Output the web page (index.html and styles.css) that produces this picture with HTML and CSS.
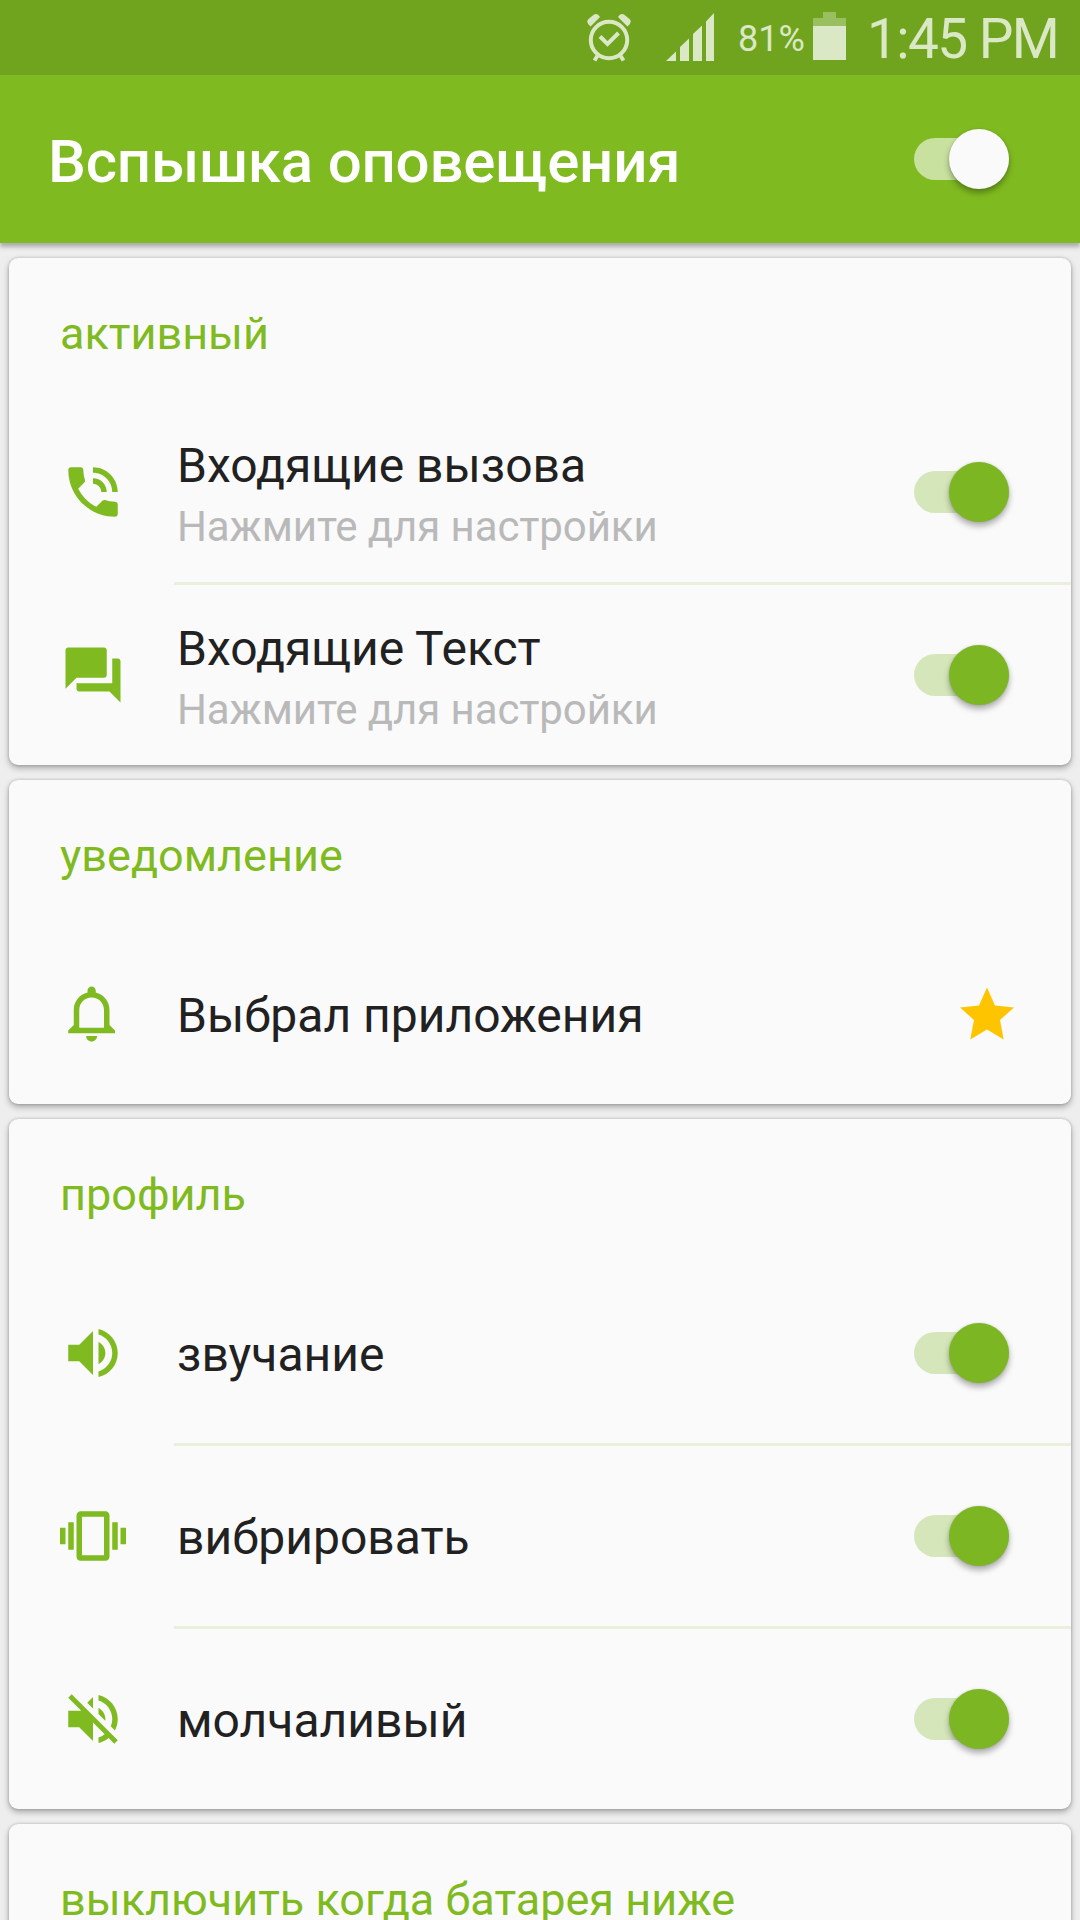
FILE: index.html
```html
<!DOCTYPE html>
<html lang="ru">
<head>
<meta charset="utf-8">
<title>Вспышка оповещения</title>
<meta name="viewport" content="width=device-width,initial-scale=1">
<link rel="stylesheet" href="styles.css">
</head>
<body>
<div class="status-bar">
  <svg class="alarm" width="46" height="50" viewBox="0 0 46 50">
    <g fill="none" stroke="currentColor">
      <circle cx="23" cy="27" r="18.2" stroke-width="4"/>
      <path d="M14 23.500l7.500 7.500L32.500 20" stroke-width="4"/>
      <path d="M12 42l-3.500 5.500M34 42l3.500 5.500" stroke-width="4"/>
    </g>
    <path fill="currentColor" d="M4.500 13.500Q-.8 9 2.500 6L8 1.500Q11.500-.5 14 4zM41.500 13.500Q46.800 9 43.500 6L38 1.500Q34.500-.5 32 4z"/>
  </svg>
  <svg class="signal" width="48" height="48" viewBox="0 0 48 48">
    <path fill="currentColor" d="M0 48L10 38.500V48zM14 34l9-8.500V48h-9zM27 21l9-8.500V48h-9zM40 8.500L48 0V48h-8z"/>
  </svg>
  <span class="percent">81%</span>
  <svg class="battery" width="33" height="48" viewBox="0 0 33 48">
    <path fill="currentColor" opacity=".4" d="M0 6h10V0h13v6h10v8H0z"/>
    <path fill="currentColor" d="M0 14h33v34H0z"/>
  </svg>
  <span class="clock">1:45 PM</span>
</div>

<header class="app-bar">
  <h1>Вспышка оповещения</h1>
  <div class="switch light"><span class="thumb"></span></div>
</header>

<main class="cards">
  <section class="card">
    <h2>активный</h2>
    <div class="row">
      <svg class="icon" viewBox="0 0 24 24"><path d="M20 15.500c-1.250 0-2.450-.2-3.570-.57-.35-.11-.74-.03-1.020.24l-2.200 2.200c-2.830-1.440-5.150-3.750-6.590-6.590l2.200-2.210c.28-.26.36-.65.25-1C8.700 6.450 8.500 5.250 8.500 4c0-.55-.45-1-1-1H4c-.55 0-1 .45-1 1 0 9.390 7.610 17 17 17 .55 0 1-.45 1-1v-3.500c0-.55-.45-1-1-1zM19 12h2c0-4.970-4.030-9-9-9v2c3.870 0 7 3.130 7 7zm-4 0h2c0-2.760-2.240-5-5-5v2c1.660 0 3 1.340 3 3z"/></svg>
      <div class="text two-line">
        <div class="label">Входящие вызова</div>
        <div class="hint">Нажмите для настройки</div>
      </div>
      <div class="switch"><span class="thumb"></span></div>
    </div>
    <div class="divider"></div>
    <div class="row">
      <svg class="icon" viewBox="0 0 24 24"><path d="M21 6h-2v9H6v2c0 .55.45 1 1 1h11l4 4V7c0-.55-.45-1-1-1zm-4 6V3c0-.55-.45-1-1-1H3c-.55 0-1 .45-1 1v14l4-4h10c.55 0 1-.45 1-1z"/></svg>
      <div class="text two-line">
        <div class="label">Входящие Текст</div>
        <div class="hint">Нажмите для настройки</div>
      </div>
      <div class="switch"><span class="thumb"></span></div>
    </div>
  </section>

  <section class="card">
    <h2>уведомление</h2>
    <div class="row">
      <svg class="icon" viewBox="0 0 24 24"><path d="M11.500 22c1.100 0 2-.9 2-2h-4c0 1.100.9 2 2 2zm6.500-6v-5.500c0-3.070-2.130-5.640-5-6.320V3.500c0-.83-.67-1.500-1.500-1.500S10 2.670 10 3.500v.68c-2.870.68-5 3.250-5 6.320V16l-2 2v1h17v-1l-2-2zm-2 1H7v-6.500C7 8.010 9.010 6 11.500 6S16 8.010 16 10.500V17z"/></svg>
      <div class="text"><div class="label">Выбрал приложения</div></div>
      <svg class="star" viewBox="0 0 54 54"><path d="M27 .5L35 18.500 54 20.500 40 33 43.700 52.500 27 42.500 10.300 52.500 14 33 0 20.500 19 18.500z"/></svg>
    </div>
  </section>

  <section class="card">
    <h2>профиль</h2>
    <div class="row">
      <svg class="icon" viewBox="0 0 24 24"><path d="M3 9v6h4l5 5V4L7 9H3zm13.500 3c0-1.770-1.020-3.290-2.500-4.030v8.050c1.480-.73 2.500-2.250 2.500-4.020zM14 3.230v2.060c2.890.86 5 3.540 5 6.710s-2.110 5.850-5 6.710v2.060c4.010-.91 7-4.490 7-8.770s-2.990-7.860-7-8.770z"/></svg>
      <div class="text"><div class="label">звучание</div></div>
      <div class="switch"><span class="thumb"></span></div>
    </div>
    <div class="divider"></div>
    <div class="row">
      <svg class="icon" viewBox="0 0 24 24"><path d="M0 15h2V9H0v6zm3 2h2V7H3v10zm19-8v6h2V9h-2zm-3 8h2V7h-2v10zM16.500 3h-9C6.670 3 6 3.670 6 4.500v15c0 .83.67 1.500 1.500 1.500h9c.83 0 1.500-.67 1.500-1.500v-15c0-.83-.67-1.500-1.500-1.500zM16 19H8V5h8v14z"/></svg>
      <div class="text"><div class="label">вибрировать</div></div>
      <div class="switch"><span class="thumb"></span></div>
    </div>
    <div class="divider"></div>
    <div class="row">
      <svg class="icon" viewBox="0 0 24 24"><path d="M16.500 12c0-1.770-1.020-3.290-2.500-4.030v2.210l2.450 2.450c.03-.2.05-.41.05-.63zm2.500 0c0 .94-.2 1.820-.54 2.640l1.510 1.510C20.630 14.910 21 13.500 21 12c0-4.280-2.990-7.860-7-8.770v2.060c2.890.86 5 3.540 5 6.710zM4.270 3L3 4.270 7.730 9H3v6h4l5 5v-6.730l4.250 4.250c-.67.52-1.420.93-2.250 1.180v2.060c1.380-.31 2.630-.95 3.690-1.810L19.730 21 21 19.730l-9-9L4.270 3zM12 4L9.910 6.090 12 8.180V4z"/></svg>
      <div class="text"><div class="label">молчаливый</div></div>
      <div class="switch"><span class="thumb"></span></div>
    </div>
  </section>

  <section class="card">
    <h2>выключить когда батарея ниже</h2>
  </section>
</main>
</body>
</html>
```
FILE: styles.css
```css
*{box-sizing:border-box}
body{
  margin:0;height:1920px;overflow:hidden;
  font-family:Roboto,"Noto Sans",sans-serif;
  background:#eee;color:#212121;
}
svg{display:block;flex:none}

/* Status bar */
.status-bar{
  display:flex;justify-content:flex-end;align-items:center;
  height:75px;padding-right:19px;
  background:#70a41e;color:#dae8c6;
  white-space:nowrap;
}
.signal{margin:0 24px 2px 34px}
.percent{width:75px;font-size:36px;line-height:75px;padding-top:3px}
.battery{margin-bottom:3px}
.clock{width:194px;margin-left:21px;font-size:55px;line-height:75px;letter-spacing:-1.600px;padding-top:3px}

/* App bar */
.app-bar{
  position:relative;
  display:flex;align-items:center;justify-content:space-between;
  height:168px;padding:0 71px 0 48px;
  background:#7fbb20;color:#fff;
  box-shadow:0 4px 4px rgba(0,0,0,.27);
}
h1{margin:0;padding-top:5px;font-size:60px;font-weight:500;line-height:70px;letter-spacing:-.2px}

/* Cards */
.cards{display:flex;flex-direction:column;gap:15px;padding:15px 9px 0}
.card{
  flex:none;
  background:#fafafa;border-radius:9px;
  box-shadow:0 3px 6px rgba(0,0,0,.3),0 0 3px rgba(0,0,0,.2);
}
h2{
  height:144px;margin:0;padding:7px 51px 0;
  font-size:45px;font-weight:400;line-height:137px;color:#7fbb20;
}
.row{display:flex;align-items:center;height:180px;padding:0 62px 0 51px}
.icon{width:66px;height:66px;fill:#7fbb20}
.text{flex:1;margin-left:51px;padding-top:4px}
.two-line{padding-top:8px}
.label{font-size:48px;line-height:60px}
.hint{padding-top:1px;font-size:42px;line-height:59px;letter-spacing:-.1px;color:#b9b9b9}
.divider{height:3px;margin-left:165px;background:#e9f1dd}
.star{width:54px;height:54px;margin-right:-5px;fill:#ffc400}

/* Switches */
.switch{
  display:flex;align-items:center;justify-content:flex-end;
  width:95px;height:42px;
  border-radius:21px;background:#d5e7ba;
}
.thumb{
  width:60px;height:60px;border-radius:50%;
  background:#7cb723;
  box-shadow:0 4px 6px rgba(0,0,0,.32),0 0 2px rgba(0,0,0,.12);
}
.light{background:#c8e19f}
.light .thumb{background:#fafafa}
```
